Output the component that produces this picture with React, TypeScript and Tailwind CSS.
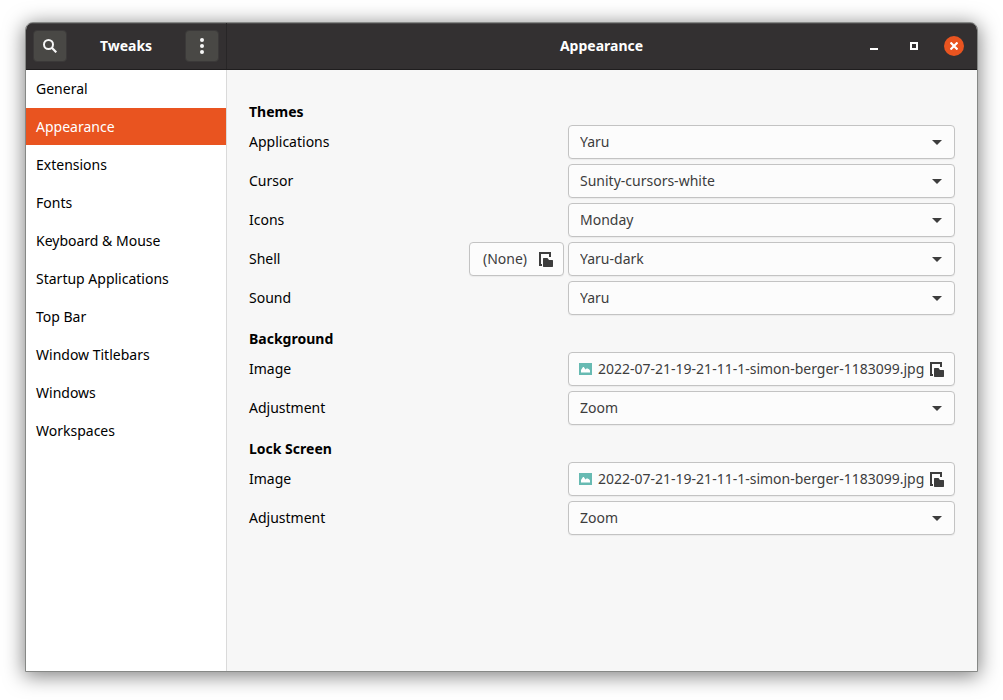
import { useState } from "react";
import { clsx } from "clsx";

const SECTIONS = [
  "General",
  "Appearance",
  "Extensions",
  "Fonts",
  "Keyboard & Mouse",
  "Startup Applications",
  "Top Bar",
  "Window Titlebars",
  "Windows",
  "Workspaces",
];

const WALLPAPER = "2022-07-21-19-21-11-1-simon-berger-1183099.jpg";

function OpenFileIcon() {
  return (
    <svg className="shrink-0" width="14" height="15" viewBox="0 0 14 15" fill="#3d3d3d" aria-hidden="true">
      <path d="M0 0h12v5h-2V2H2v10h1v2H0z" />
      <path d="M4.5 6h4L10 8h3.5l.5.5v6l-.5.5h-9l-.5-.5v-8z" />
    </svg>
  );
}

function PictureIcon() {
  return (
    <svg className="shrink-0" width="13" height="12" viewBox="0 0 13 12" aria-hidden="true">
      <path d="M0 0h13v12H0z" fill="#67bab2" />
      <path d="M2 9.5V7l2-3h.8L6.5 6.5 8.2 5 9 6.3l.7-.5L11 7.5v2z" fill="#fff" />
    </svg>
  );
}

interface SelectRowProps {
  id: string;
  label: string;
  options: string[];
  children?: React.ReactNode;
}

function SelectRow({ id, label, options, children }: SelectRowProps) {
  return (
    <div className="flex items-center gap-1">
      <label htmlFor={id} className="flex-1">
        {label}
      </label>
      {children}
      <div className="relative w-[387px]">
        <select
          id={id}
          className="block h-[34px] w-full appearance-none rounded border border-[#c3c3c3] bg-[#fcfcfc] pr-8 pl-[11px] text-[#3d3d3d] shadow-[0_1px_1px_rgba(0,0,0,0.05)]"
        >
          {options.map((option) => (
            <option key={option}>{option}</option>
          ))}
        </select>
        <svg
          className="pointer-events-none absolute top-[15px] right-[13px]"
          width="10"
          height="5"
          viewBox="0 0 10 5"
          fill="#3d3d3d"
          aria-hidden="true"
        >
          <path d="M0 0h10L5 5z" />
        </svg>
      </div>
    </div>
  );
}

function FileRow({ id, label, file }: { id: string; label: string; file: string }) {
  return (
    <div className="flex items-center gap-1">
      <label htmlFor={id} className="flex-1">
        {label}
      </label>
      <button
        id={id}
        type="button"
        className="flex h-[34px] w-[387px] items-center rounded border border-[#c3c3c3] bg-[#fcfcfc] px-2.5 text-[#3d3d3d] shadow-[0_1px_1px_rgba(0,0,0,0.05)]"
      >
        <PictureIcon />
        <span className="ml-1.5 flex-1 text-left whitespace-nowrap">{file}</span>
        <OpenFileIcon />
      </button>
    </div>
  );
}

function Heading({ children }: { children: React.ReactNode }) {
  return <h2 className="pt-[11px] text-sm leading-4 font-bold">{children}</h2>;
}

export default function App() {
  const [active, setActive] = useState("Appearance");

  return (
    <div className="flex min-h-screen bg-white px-[25px] pt-[22px] pb-7 font-['Noto_Sans',sans-serif] text-sm text-black">
      <div className="flex flex-1 flex-col overflow-hidden rounded-t-lg border border-[#868886] bg-[#f7f7f7] shadow-[0_3px_20px_1px_rgba(0,0,0,0.5)]">
        <header className="flex h-[47px] border-b border-[#1f1d1e] bg-[#333031] text-white shadow-[inset_0_1px_0_#4a4849]">
          <div className="flex w-[201px] items-center justify-between border-r border-[#282627] px-[7px]">
            <button
              type="button"
              aria-label="Search"
              className="flex h-8 w-[34px] items-center justify-center rounded border border-[#3b3939] bg-[#494845]"
            >
              <svg width="14" height="14" viewBox="0 0 14 14" fill="none" stroke="#f7f7f7" strokeWidth="2" aria-hidden="true">
                <circle cx="5.5" cy="5.5" r="4.5" />
                <path d="m8.8 8.8 4.5 4.5" strokeWidth="2.2" />
              </svg>
            </button>
            <h1 className="font-bold">Tweaks</h1>
            <button
              type="button"
              aria-label="Menu"
              className="flex h-8 w-[34px] items-center justify-center rounded border border-[#3b3939] bg-[#494845]"
            >
              <svg width="4" height="16" viewBox="0 0 4 16" fill="#f7f7f7" aria-hidden="true">
                <circle cx="2" cy="2" r="2" />
                <circle cx="2" cy="8" r="2" />
                <circle cx="2" cy="14" r="2" />
              </svg>
            </button>
          </div>
          <div className="grid flex-1 grid-cols-[1fr_auto_1fr] items-center pr-[13px]">
            <h2 className="col-start-2 pl-3 font-bold">{active}</h2>
            <div className="flex justify-end gap-5">
              <button type="button" aria-label="Minimize" className="flex size-5 items-center justify-center">
                <svg width="8" height="8" viewBox="0 0 8 8" fill="#fff" aria-hidden="true">
                  <path d="M0 6h8v2H0z" />
                </svg>
              </button>
              <button type="button" aria-label="Maximize" className="flex size-5 items-center justify-center">
                <svg width="8" height="8" viewBox="0 0 8 8" fill="none" stroke="#fff" strokeWidth="2" aria-hidden="true">
                  <path d="M1 1h6v6H1z" />
                </svg>
              </button>
              <button
                type="button"
                aria-label="Close"
                className="flex size-5 items-center justify-center rounded-full bg-[#e95420]"
              >
                <svg width="8" height="8" viewBox="0 0 8 8" stroke="#fff" strokeWidth="2.2" aria-hidden="true">
                  <path d="m.5.5 7 7M7.5.5l-7 7" />
                </svg>
              </button>
            </div>
          </div>
        </header>

        <div className="flex flex-1">
          <nav className="flex w-[201px] flex-col gap-px border-r border-[#dadada] bg-white">
            {SECTIONS.map((name) => (
              <button
                key={name}
                type="button"
                onClick={() => setActive(name)}
                className={clsx("h-[37px] px-2.5 text-left", name === active && "bg-[#e95420] text-white")}
              >
                {name}
              </button>
            ))}
          </nav>

          <main className="flex flex-1 flex-col gap-[5px] px-[22px] pt-[23px]">
            <Heading>Themes</Heading>
            <SelectRow id="applications" label="Applications" options={["Yaru", "Adwaita"]} />
            <SelectRow id="cursor" label="Cursor" options={["Sunity-cursors-white", "Yaru"]} />
            <SelectRow id="icons" label="Icons" options={["Monday", "Yaru"]} />
            <SelectRow id="shell" label="Shell" options={["Yaru-dark", "Yaru"]}>
              <button
                type="button"
                className="flex h-[34px] w-[95px] items-center justify-between rounded border border-[#c3c3c3] bg-[#fcfcfc] pr-2.5 pl-[13px] text-[#3d3d3d] shadow-[0_1px_1px_rgba(0,0,0,0.05)]"
              >
                (None)
                <OpenFileIcon />
              </button>
            </SelectRow>
            <SelectRow id="sound" label="Sound" options={["Yaru", "Default"]} />

            <Heading>Background</Heading>
            <FileRow id="background-image" label="Image" file={WALLPAPER} />
            <SelectRow id="background-adjustment" label="Adjustment" options={["Zoom", "Centered", "Scaled"]} />

            <Heading>Lock Screen</Heading>
            <FileRow id="lock-image" label="Image" file={WALLPAPER} />
            <SelectRow id="lock-adjustment" label="Adjustment" options={["Zoom", "Centered", "Scaled"]} />
          </main>
        </div>
      </div>
    </div>
  );
}
